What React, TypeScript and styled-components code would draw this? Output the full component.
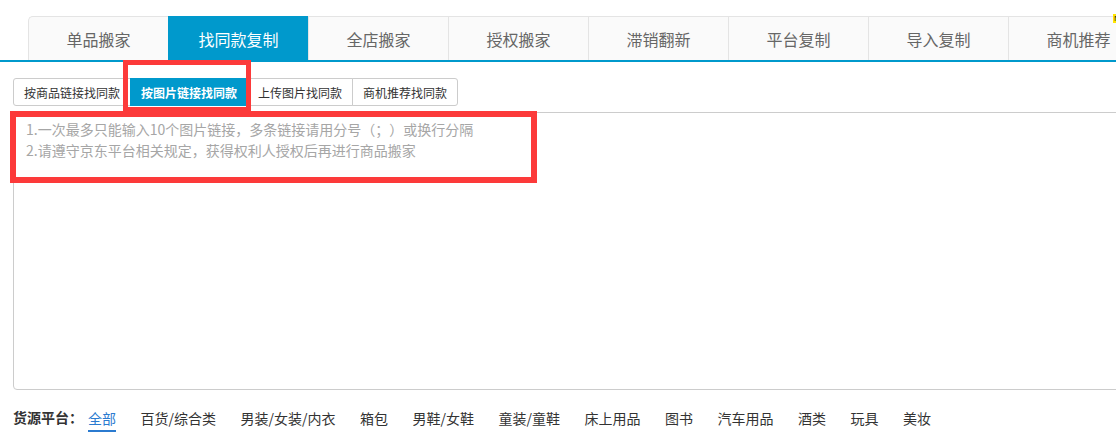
import React from "react";
import styled, { createGlobalStyle } from "styled-components";

const Global = createGlobalStyle`
  html, body { margin: 0; padding: 0; overflow: hidden; background: #fff; }
  body { font-family: "Noto Sans CJK SC", "Noto Sans", sans-serif; color: #333; text-spacing-trim: space-all; }
  * { box-sizing: border-box; }
`;

const Page = styled.div`
  position: relative;
  width: 1160px;
  height: 433px;
  padding-top: 16px;
`;

const TabBar = styled.div`
  display: flex;
  padding-left: 28px;
  border-bottom: 2px solid #0099cc;
`;

const Tab = styled.div<{ $active?: boolean; $first?: boolean }>`
  position: relative;
  width: 140px;
  height: 44px;
  display: flex;
  align-items: center;
  justify-content: center;
  font-size: 16px;
  color: ${(p) => (p.$active ? "#fff" : "#666")};
  background: ${(p) => (p.$active ? "#0099cc" : "#fafafa")};
  border-top: 1px solid ${(p) => (p.$active ? "#0099cc" : "#e4e4e4")};
  border-left: 1px solid ${(p) => (p.$active ? "#0099cc" : "#e4e4e4")};
  border-top-left-radius: ${(p) => (p.$first ? "5px" : "0")};
  flex-shrink: 0;
`;

const Badge = styled.span`
  position: absolute;
  top: -3px;
  left: 104px;
  width: 12px;
  height: 9px;
  background: #ffe600;
  color: #222;
  font-size: 8px;
  line-height: 9px;
  padding-left: 1px;
  font-family: "Liberation Sans", sans-serif;
`;

const Body = styled.div`
  padding: 16px 0 0 13px;
`;

const SubTabs = styled.div`
  display: flex;
`;

const SubTab = styled.div<{ $active?: boolean }>`
  height: 28px;
  display: flex;
  align-items: center;
  padding: 0 10px;
  font-size: 12px;
  white-space: nowrap;
  color: ${(p) => (p.$active ? "#fff" : "#333")};
  font-weight: ${(p) => (p.$active ? 700 : 400)};
  background: ${(p) => (p.$active ? "#0099cc" : "#fff")};
  border: 1px solid ${(p) => (p.$active ? "#0099cc" : "#ccc")};
  margin-left: -1px;
  &:first-child {
    margin-left: 0;
    border-radius: 3px 0 0 3px;
  }
  &:last-child {
    border-radius: 0 3px 3px 0;
  }
`;

const Input = styled.textarea`
  display: block;
  margin-top: 6px;
  width: 1160px;
  height: 278px;
  border: 1px solid #ccc;
  border-radius: 4px;
  padding: 6px 12px;
  font-family: "Noto Sans CJK SC", "Noto Sans", sans-serif;
  font-size: 14px;
  line-height: 21px;
  resize: none;
  outline: none;
  text-spacing-trim: space-all;
  &::placeholder {
    color: #a6a6a6;
  }
`;

const Filter = styled.div`
  display: flex;
  align-items: center;
  margin-top: 14px;
  font-size: 14px;
  height: 26px;
`;

const FilterLabel = styled.span`
  font-weight: 700;
  color: #333;
  margin-right: 5px;
`;

const FilterItem = styled.span<{ $active?: boolean }>`
  margin-right: 24.5px;
  color: ${(p) => (p.$active ? "#2b7bd0" : "#333")};
  padding-bottom: 2px;
  border-bottom: 2px solid ${(p) => (p.$active ? "#2b7bd0" : "transparent")};
  line-height: 20px;
  margin-top: 5px;
`;

const RedBox = styled.div<{ $x: number; $y: number; $w: number; $h: number; $b: number }>`
  position: absolute;
  left: ${(p) => p.$x}px;
  top: ${(p) => p.$y}px;
  width: ${(p) => p.$w}px;
  height: ${(p) => p.$h}px;
  border: ${(p) => p.$b}px solid #fc3a3a;
  pointer-events: none;
`;

const tabs = ["单品搬家", "找同款复制", "全店搬家", "授权搬家", "滞销翻新", "平台复制", "导入复制", "商机推荐"];
const subTabs = ["按商品链接找同款", "按图片链接找同款", "上传图片找同款", "商机推荐找同款"];
const filters = ["全部", "百货/综合类", "男装/女装/内衣", "箱包", "男鞋/女鞋", "童装/童鞋", "床上用品", "图书", "汽车用品", "酒类", "玩具", "美妆"];

export default function App() {
  return (
    <>
      <Global />
      <Page>
        <TabBar>
          {tabs.map((t, i) => (
            <Tab key={t} $active={i === 1} $first={i === 0}>
              {t}
              {i === tabs.length - 1 && <Badge>N</Badge>}
            </Tab>
          ))}
        </TabBar>
        <Body>
          <SubTabs>
            {subTabs.map((t, i) => (
              <SubTab key={t} $active={i === 1}>
                {t}
              </SubTab>
            ))}
          </SubTabs>
          <Input
            placeholder={"1.一次最多只能输入10个图片链接，多条链接请用分号（；）或换行分隔\n2.请遵守京东平台相关规定，获得权利人授权后再进行商品搬家"}
          />
          <Filter>
            <FilterLabel>货源平台：</FilterLabel>
            {filters.map((f, i) => (
              <FilterItem key={f} $active={i === 0}>
                {f}
              </FilterItem>
            ))}
          </Filter>
        </Body>
        <RedBox $x={123} $y={60} $w={128} $h={52} $b={5} />
        <RedBox $x={10} $y={111} $w={527} $h={72} $b={6} />
      </Page>
    </>
  );
}
